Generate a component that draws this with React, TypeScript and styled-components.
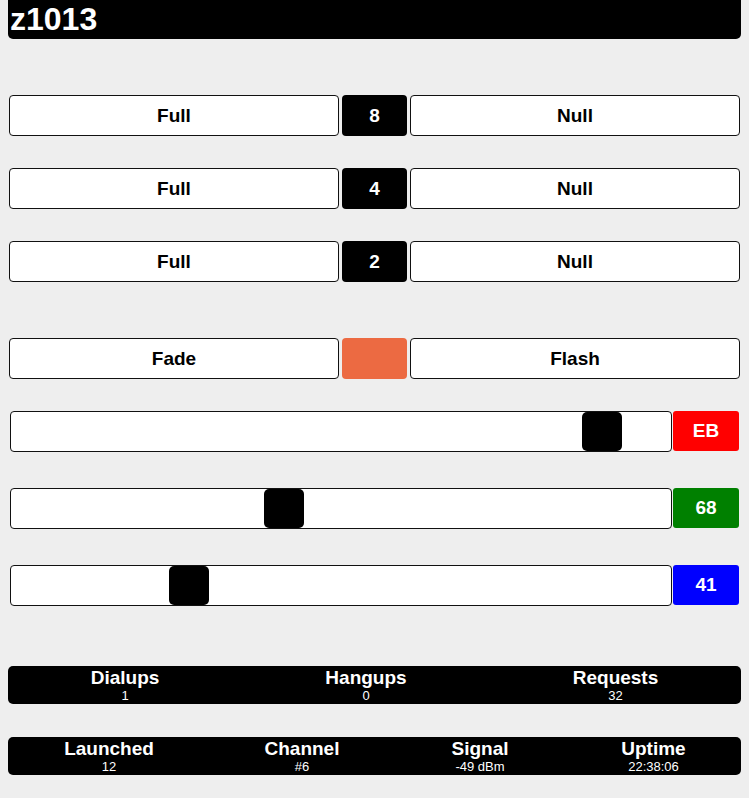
import React from "react";
import styled, { createGlobalStyle } from "styled-components";

const GlobalStyle = createGlobalStyle`
  html, body {
    margin: 0;
    background: #eeeeee;
  }
  body {
    padding: 0 8px;
    font-family: "Liberation Sans", Arial, Helvetica, sans-serif;
  }
`;

const Page = styled.div`
  display: flex;
  flex-direction: column;
  width: 733px;
`;

const Header = styled.header`
  height: 39px;
  background: #000;
  color: #fff;
  border-radius: 0 0 5px 5px;
  display: flex;
  align-items: center;
  padding-left: 2px;
  font-size: 32px;
  font-weight: bold;
`;

const ButtonRow = styled.div<{ $mt: number }>`
  display: flex;
  gap: 3px;
  padding: 0 1px;
  height: 41px;
  margin-top: ${(p) => p.$mt}px;
`;

const ToggleButton = styled.div`
  flex: 1;
  background: #fff;
  border: 1px solid #111;
  border-radius: 4px;
  display: flex;
  align-items: center;
  justify-content: center;
  font-size: 19px;
  font-weight: bold;
  color: #000;
`;

const Swatch = styled.div<{ $bg: string }>`
  width: 65px;
  background: ${(p) => p.$bg};
  border-radius: 4px;
  display: flex;
  align-items: center;
  justify-content: center;
  color: #fff;
  font-size: 19px;
  font-weight: bold;
`;

const SliderRow = styled.div<{ $mt: number }>`
  display: flex;
  gap: 1px;
  padding: 0 2px;
  height: 41px;
  margin-top: ${(p) => p.$mt}px;
`;

const Track = styled.div`
  position: relative;
  flex: 1;
  background: #fff;
  border: 1px solid #111;
  border-radius: 4px;
`;

const Thumb = styled.div`
  position: absolute;
  top: 0;
  width: 40px;
  height: 100%;
  background: #000;
  border-radius: 5px;
`;

const ValueBox = styled.div<{ $bg: string }>`
  width: 66px;
  height: 40px;
  background: ${(p) => p.$bg};
  border-radius: 3px;
  display: flex;
  align-items: center;
  justify-content: center;
  color: #fff;
  font-size: 19px;
  font-weight: bold;
`;

const StatsBar = styled.div<{ $mt: number; $cols: string }>`
  display: grid;
  grid-template-columns: ${(p) => p.$cols};
  height: 38px;
  padding-top: 1px;
  box-sizing: border-box;
  background: #000;
  color: #fff;
  border-radius: 5px;
  margin-top: ${(p) => p.$mt}px;
`;

const Stat = styled.div`
  display: flex;
  flex-direction: column;
  align-items: center;
`;

const StatLabel = styled.div`
  font-size: 19px;
  font-weight: bold;
  line-height: 22px;
`;

const StatValue = styled.div`
  font-size: 13px;
  line-height: 14px;
`;

const rows = [
  { n: "8", mt: 56 },
  { n: "4", mt: 32 },
  { n: "2", mt: 32 },
];

const sliders = [
  { v: 0xeb, color: "#ff0000", mt: 32 },
  { v: 0x68, color: "#008000", mt: 36 },
  { v: 0x41, color: "#0000ff", mt: 36 },
];

const stats1 = [
  ["Dialups", "1"],
  ["Hangups", "0"],
  ["Requests", "32"],
];

const stats2 = [
  ["Launched", "12"],
  ["Channel", "#6"],
  ["Signal", "-49 dBm"],
  ["Uptime", "22:38:06"],
];

export default function App() {
  return (
    <>
      <GlobalStyle />
      <Page>
        <Header>z1013</Header>
        {rows.map((r) => (
          <ButtonRow key={r.n} $mt={r.mt}>
            <ToggleButton>Full</ToggleButton>
            <Swatch $bg="#000">{r.n}</Swatch>
            <ToggleButton>Null</ToggleButton>
          </ButtonRow>
        ))}
        <ButtonRow $mt={56}>
          <ToggleButton>Fade</ToggleButton>
          <Swatch $bg="#ec6a42" />
          <ToggleButton>Flash</ToggleButton>
        </ButtonRow>
        {sliders.map((s, i) => (
          <SliderRow key={i} $mt={s.mt}>
            <Track>
              <Thumb style={{ left: `calc((100% - 40px) * ${s.v / 255})` }} />
            </Track>
            <ValueBox $bg={s.color}>
              {s.v.toString(16).toUpperCase().padStart(2, "0")}
            </ValueBox>
          </SliderRow>
        ))}
        <StatsBar $mt={60} $cols="234fr 248fr 251fr">
          {stats1.map(([l, v]) => (
            <Stat key={l}>
              <StatLabel>{l}</StatLabel>
              <StatValue>{v}</StatValue>
            </Stat>
          ))}
        </StatsBar>
        <StatsBar $mt={33} $cols="202fr 184fr 172fr 175fr">
          {stats2.map(([l, v]) => (
            <Stat key={l}>
              <StatLabel>{l}</StatLabel>
              <StatValue>{v}</StatValue>
            </Stat>
          ))}
        </StatsBar>
      </Page>
    </>
  );
}
